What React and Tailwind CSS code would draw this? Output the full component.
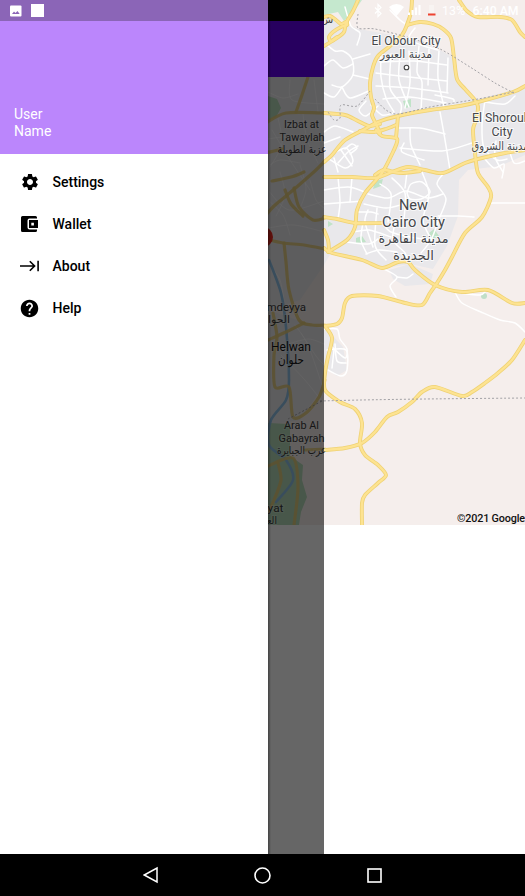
import React from "react";
import { MdSettings, MdHelp } from "react-icons/md";

// Turns "x,y x,y ..." into a smooth path through every point.
function smooth(list) {
  const p = list.split(" ").map((s) => s.split(",").map(Number));
  let d = `M${p[0]}`;
  for (let i = 0; i < p.length - 1; i++) {
    const a = p[i - 1] || p[i], b = p[i], c = p[i + 1], e = p[i + 2] || c;
    d += `C${b[0] + (c[0] - a[0]) / 7},${b[1] + (c[1] - a[1]) / 7} ${c[0] - (e[0] - b[0]) / 7},${c[1] - (e[1] - b[1]) / 7} ${c}`;
  }
  return d;
}

const highways = [
  "358,0 353,11 346,23 344,32 337,38 324,46",
  "324,17 330,16 336,20 341,24 346,22 347,25 341,27 333,32 329,37 331,41 337,37",
  "412,0 411,12 407,25 402,35 390,46 378,56 373,67 370,83 371,97 374,108 372,115 376,124 380,133",
  "407,25 420,22 433,24 443,29 451,38 454,58 457,79 465,89 474,99 478,107 476,120 473,130 475,153 478,173 488,187 491,197 482,217 465,233 452,257 445,270 437,283 430,293 422,305 405,303 378,296 352,296 345,303 342,318 337,324 325,326",
  "459,0 467,11 478,17 500,17 512,20 520,32 525,37",
  "525,86 513,92 478,102 460,106 430,110 398,116 378,122 365,129 345,140 332,155 324,162",
  "324,113 345,115 358,121 369,126 380,124",
  "360,131 374,132 386,129 396,125",
  "376,130 382,136 396,138 397,142 393,152 382,173 365,193 357,210 355,227 347,240 328,252",
  "398,116 396,138",
  "324,177 352,177 375,178 392,172 408,167 425,170 443,173 465,163 478,159 505,153 525,150",
  "375,175 384,170 400,173 420,171",
  "324,217 337,219 355,223 382,223",
  "324,248 332,253 362,260 382,268 398,262 408,262 415,270 435,285 462,292 488,290 512,303 525,303",
  "324,230 328,240 329,250",
  "325,326 332,338 328,357 325,373 325,390 340,402 355,409 362,423 360,443 365,455 378,465 386,475 378,483 365,495 362,503 362,525",
  "525,340 512,360 498,373 485,383 472,392 462,396 435,387 422,392 412,402 398,412 387,417 375,432 362,443 345,448 325,450",
];

const westRoads = [
  "266,123 286,113 325,113",
  "308,77 302,95 296,112",
  "266,153 282,149",
  "325,161 316,170 299,185 286,196 274,206 266,215",
  "272,181 291,177 304,172",
  "294,188 299,207 313,220 325,218",
  "285,190 291,204 303,216",
  "266,239 283,243 304,245 325,249",
  "284,243 286,262 289,290 299,320 312,325 325,325",
  "268,340 286,332 304,323",
  "273,313 277,337 274,355 275,387 289,387 293,417 306,413 319,397 325,380",
  "325,449 305,450",
  "268,466 293,458 298,487 294,525",
  "278,463 281,480 274,500 268,512",
];

const streets = [
  "327,45 335,51 343,51 352,59 353,75 342,87 332,85",
  "353,59 370,54", "353,75 370,79", "324,66 333,60 343,68 353,64", "324,93 334,97 342,87",
  "342,87 350,98 371,90", "345,7 351,26 360,33 357,45", "390,10 400,20 407,25",
  "381,53 381,77 386,98 394,112", "391,54 390,88 401,104 400,115", "400,55 399,80 409,107",
  "409,51 410,82 405,108", "419,46 417,72 422,82 421,110", "429,49 428,85", "439,51 438,78 444,107",
  "448,58 447,92", "380,62 414,61 447,65", "376,73 400,76 447,81", "376,86 411,88 448,93", "383,99 410,97 446,103",
  "415,28 409,38 421,45 438,50", "435,95 453,99 453,104", "366,101 359,110 366,116 378,106", "371,105 382,115 393,113",
  "398,128 420,128 445,134", "410,128 411,145 420,165", "404,143 402,152 424,160",
  "440,112 444,134 450,170", "400,148 442,151 472,143",
  "324,132 335,126 353,132", "324,143 340,137", "332,154 346,148 353,161 345,168 329,159",
  "338,163 348,152 358,146", "345,149 352,144 357,148 350,154", "341,150 352,166", "334,158 338,172",
  "324,190 348,187 365,192", "324,204 350,202 360,201", "338,177 340,202 338,219", "352,177 350,202",
  "368,194 388,198 406,191 427,198 443,194", "364,204 386,208 404,204", "380,184 391,194 388,222", "392,178 405,193 404,219",
  "407,172 405,188", "422,172 429,194 423,220 431,239", "443,174 437,184 446,199 439,219 431,240 421,253",
  "407,193 411,184 422,182 430,192 421,199 410,199 407,193", "368,210 365,222 373,247", "377,208 375,245 386,260", "358,212 371,212 378,214",
  "353,232 369,230 391,237", "347,242 368,244 378,239", "363,222 361,240 367,254", "382,223 391,232 410,237 431,240",
  "395,223 393,240 405,253 407,262", "366,254 379,250 397,252", "438,216 458,216 474,217", "491,203 525,203",
  "485,100 482,125 484,148 497,160 507,159", "496,141 495,157 503,172", "484,158 494,168 504,164 502,178", "508,145 514,163 525,161", "485,102 505,104 515,96",
  "384,269 397,277 390,286 396,297", "397,277 407,278 413,274", "455,292 462,303 481,312 500,320 515,323 525,332",
  "460,293 480,295 486,291", "324,329 337,329 340,339 347,349 345,358 332,347", "327,350 346,350 347,370 341,376 328,370", "335,344 337,361 346,363", "334,350 332,368",
];

const westStreets = [
  "268,92 283,98 298,94", "268,139 288,137 324,142", "278,118 282,144 270,167", "303,114 307,139 318,163", "268,190 289,210 324,201",
  "280,172 285,195 276,216", "300,165 306,189 299,211", "268,228 294,225 324,232", "270,165 280,160 300,163", "310,180 316,200 324,208",
  "268,200 283,215 290,235", "285,345 308,339 324,344", "281,355 304,379 321,400", "301,333 316,356 324,365", "295,325 308,345 322,385",
  "272,268 280,280 284,300", "290,80 292,100 324,104", "314,80 318,112", "272,130 290,160 310,190",
];

const dashed = [
  "358,14 358,28 375,29 410,38 440,49 470,67 495,83 514,93",
  "370,91 357,106 341,105 340,118 334,120 328,112",
  "375,99 386,110 398,114 430,107 478,99 514,92",
  "320,401 361,400 425,399 525,398",
  "288,419 305,410 322,401",
];

const ar = "[font-family:'DejaVu_Sans',sans-serif]";

function Label({ x, y, size, children, w, arabic, fill = "#45474b", halo = 0.7 }) {
  return (
    <text
      x={x} y={y} fontSize={size} textAnchor="middle" fill={fill} textLength={w}
      lengthAdjust="spacingAndGlyphs" stroke="#fff" strokeOpacity={halo} strokeWidth="2" paintOrder="stroke"
      className={arabic ? ar : "font-[Roboto]"}
    >
      {children}
    </text>
  );
}

function WestLabel(props) {
  return <Label fill="#3a3a3a" halo={0.25} {...props} />;
}

function CityMap() {
  return (
    <svg width="257" height="525" viewBox="268 0 257 525" className="block">
      <rect x="268" width="257" height="525" fill="#f5eeec" />
      <path d="M268 77H300L324 13L346 25L359 29L409 38L440 50L452 57L457 82L474 100L525 87V155L500 166L468 170L459 180L458 216L447 246L433 269L410 264L385 268L360 259L331 253L324 265L300 300L268 310Z" fill="#e9e8eb" />
      <path d="M389 270L410 264L433 274L430 284L405 286L393 279Z" fill="#e9e8eb" />
      <path d="M268 310L312 325L328 331L343 347L347 370L337 376L328 370L324 385L300 420L268 425Z" fill="#e9e8eb" />
      <path d="M324 0H362L355 10L344 21L338 12L324 15Z" fill="#c5e8ce" />
      <path d="M268 96L277 99L281 108L276 117L268 121Z M268 423L290 424L290 456L303 465L302 480L307 497L301 512L299 525H268Z" fill="#b4dab8" />
      <path d="M403 101L411 99L411 107L405 108Z M375 181L383 179L381 186L373 189Z M356 238L362 236L366 242L356 243Z M429 233L434 229L439 236L433 239Z M328 221L333 224L328 227Z" fill="#c0e3c8" />
      <circle cx="484" cy="296" r="3" fill="#c0dfc8" />
      <g fill="none" strokeLinejoin="round" strokeLinecap="round">
        {streets.map((s) => <path key={s} d={smooth(s)} stroke="#fff" strokeWidth="1.5" />)}
        {westStreets.map((s) => <path key={s} d={smooth(s)} stroke="#fff" strokeWidth="1" strokeOpacity=".6" />)}
        <path d={smooth("269,260 281,293 286,327 289,380 286,400 271,420 269,445 286,460 293,480 276,502")} stroke="#8ec0e6" strokeWidth="2.6" />
        {westRoads.map((s) => <path key={s} d={smooth(s)} stroke="#e6cb76" strokeWidth="3.2" strokeOpacity=".85" />)}
        {highways.map((s) => <path key={s} d={smooth(s)} stroke="#efd274" strokeWidth="3.9" />)}
        {highways.map((s) => <path key={s} d={smooth(s)} stroke="#fde391" strokeWidth="2.3" />)}
        {dashed.map((s) => <path key={s} d={smooth(s)} stroke="#a3a2a6" strokeWidth="1" strokeDasharray="2 2" strokeLinecap="butt" />)}
      </g>
      <circle cx="263" cy="237" r="10" fill="#ea2a20" />

      <Label x="406" y="45" size="12.2" w="69">El Obour City</Label>
      <Label x="406" y="58" size="11.500" w="52" arabic>مدينة العبور</Label>
      <circle cx="406.500" cy="67.500" r="2.300" fill="#fff" stroke="#444" strokeWidth="1.1" />
      <Label x="501" y="122" size="12.2" w="58">El Shorouk</Label>
      <Label x="502" y="136" size="12.2" w="21">City</Label>
      <Label x="500" y="150" size="11.500" w="57" arabic>مدينة الشروق</Label>
      <Label x="413.500" y="209.500" size="14.500" w="29">New</Label>
      <Label x="413.500" y="227" size="14.500" w="63">Cairo City</Label>
      <Label x="413.500" y="243" size="13.500" w="70" arabic>مدينة القاهرة</Label>
      <Label x="413.500" y="260" size="13.500" w="41" arabic>الجديدة</Label>
      <WestLabel x="301.500" y="128" size="11.500" w="35">Izbat at</WestLabel>
      <WestLabel x="302" y="141" size="11.500" w="45">Tawaylah</WestLabel>
      <WestLabel x="302" y="153" size="11" w="49" arabic>عزبة الطويلة</WestLabel>
      <WestLabel x="279" y="311" size="11.500" w="54">Hamdeyya</WestLabel>
      <WestLabel x="279" y="323" size="11" w="22" arabic>الحوا</WestLabel>
      <WestLabel x="291" y="350.500" size="12.500" w="40" fill="#151515">Helwan</WestLabel>
      <WestLabel x="291" y="364" size="12.500" w="26" fill="#151515" arabic>حلوان</WestLabel>
      <WestLabel x="301.500" y="429" size="11.500" w="35">Arab Al</WestLabel>
      <WestLabel x="301.500" y="442" size="11.500" w="46">Gabayrah</WestLabel>
      <WestLabel x="301.500" y="454" size="11" w="49" arabic>عرب الجبايرة</WestLabel>
      <WestLabel x="269" y="512" size="11.500" w="29">Ayyat</WestLabel>
      <WestLabel x="265" y="524" size="11" w="24" arabic>العياط</WestLabel>
      <text x="321" y="23" fontSize="10" fill="#444" className={ar} textAnchor="start">ش</text>
      <text x="457" y="521.500" fontSize="10.800" fontWeight="500" fill="#111" textLength="68" className="font-[Roboto]">©2021 Google</text>
    </svg>
  );
}

function AboutIcon() {
  return (
    <svg width="20" height="12" viewBox="0 0 20 12" fill="none" stroke="#000" strokeWidth="1.6">
      <path d="M0 6H14.500M9.800 1.200L14.600 6L9.800 10.800M18.100 .8V11.200" />
    </svg>
  );
}

function WalletIcon() {
  return (
    <svg width="19" height="18" viewBox="0 0 19 18">
      <path fillRule="evenodd" fill="#000" d="M2.500 1H15.500Q17 1 17 2.500V3.500H9.500Q7.500 3.500 7.500 5.500V12.500Q7.500 14.500 9.500 14.500H17V15.500Q17 17 15.500 17H2.500Q1 17 1 15.500V2.500Q1 1 2.500 1ZM9 5H18V13H9ZM11.300 7.800V10.400H13.900V7.800Z" />
    </svg>
  );
}

const items = [
  ["Settings", <MdSettings size={20} />],
  ["Wallet", <WalletIcon />],
  ["About", <AboutIcon />],
  ["Help", <MdHelp size={21} />],
];

function Drawer() {
  return (
    <aside className="flex w-[268px] shrink-0 flex-col bg-white">
      <header className="flex h-[154px] flex-col justify-between bg-[#bb86fc]">
        <div className="flex h-[21px] items-center gap-[9px] bg-[#8b65b7] pl-[10px]">
          <svg width="12" height="12" viewBox="0 0 12 12">
            <rect y="0.500" width="11.500" height="11" rx="1" fill="#fff" />
            <path d="M2 9L4 6.500L5.500 8L7.500 6L9.700 9Z" fill="#8b65b7" />
          </svg>
          <div className="h-[13px] w-[13px] bg-white" />
        </div>
        <p className="w-[60px] pb-[15px] pl-[14px] text-[14px] leading-[16.500px] text-white">User Name</p>
      </header>
      <nav className="pt-[7px]">
        {items.map(([name, icon]) => (
          <div key={name} className="flex h-[42px] items-center">
            <span className="ml-[19px] flex w-[21px] justify-center text-black">{icon}</span>
            <span className="ml-[12.500px] pt-px text-[14px] font-medium text-black">{name}</span>
          </div>
        ))}
      </nav>
    </aside>
  );
}

function StatusIcons() {
  return (
    <svg width="155" height="21" viewBox="370 0 155 21" className="absolute top-0 right-0">
      <path d="M375 7.500L381 13.500L378 16.500V4.500L381 7.500L375 13.500" fill="none" stroke="#fff" strokeWidth="1.2" />
      <path d="M389 7Q396.500 1 404 7L396.500 16Z" fill="#fff" />
      <path d="M408 15V12.500H410V15ZM411.500 15V10H413.500V15ZM415 15V7.500H417V15ZM418.500 15V5H420.500V15Z" fill="#fff" />
      <path d="M429 5H434V13H429Z" fill="#fff" fillOpacity=".35" />
      <path d="M428 13.500H435.500V15.500H428Z" fill="#ed4330" />
      <g fill="#fff" fontSize="12" className="font-[Roboto]">
        <text x="442" y="14.500" textLength="23" lengthAdjust="spacingAndGlyphs">13%</text>
        <text x="472.500" y="14.500" fontWeight="500" textLength="46" lengthAdjust="spacingAndGlyphs">6:40 AM</text>
      </g>
    </svg>
  );
}

export default function App() {
  return (
    <div className="flex h-[896px] w-[525px] flex-col overflow-hidden bg-white font-[Roboto,sans-serif]">
      <div className="flex h-[854px]">
        <Drawer />
        <main className="relative w-[257px] overflow-hidden bg-white">
          <CityMap />
          <StatusIcons />
          <div className="absolute inset-y-0 left-0 flex w-[56px] flex-col">
            <div className="h-[21px] bg-black" />
            <div className="h-[56px] bg-[#27005f]" />
            <div className="grow bg-black/60" />
            <div className="absolute inset-y-0 left-0 w-[3px] bg-linear-to-r from-black/35 to-transparent" />
          </div>
        </main>
      </div>
      <footer className="flex h-[42px] items-center bg-black pl-[143px]">
        <svg width="15" height="18" viewBox="0 0 15 18" fill="none" stroke="#fff" strokeWidth="1.5">
          <path d="M1.300 9L14 2V16Z" />
        </svg>
        <svg width="17" height="17" viewBox="0 0 17 17" fill="none" stroke="#fff" strokeWidth="1.6" className="ml-[96px]">
          <circle cx="8.500" cy="8.500" r="7.500" />
        </svg>
        <svg width="15" height="15" viewBox="0 0 15 15" fill="none" stroke="#fff" strokeWidth="1.6" className="ml-[96px]">
          <rect x="1" y="1" width="13" height="13" />
        </svg>
      </footer>
    </div>
  );
}
